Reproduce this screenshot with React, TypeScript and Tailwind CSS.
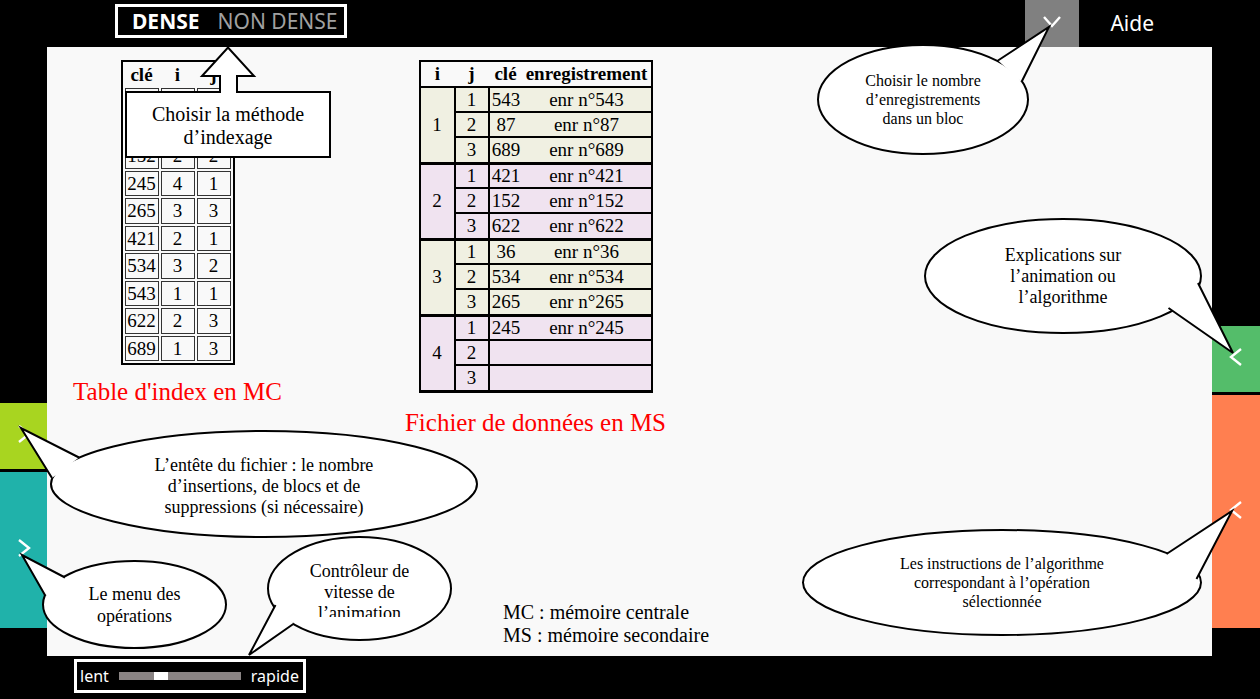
import React from "react";
import clsx from "clsx";

const indexRows = [
  [36, 3, 1],
  [87, 1, 2],
  [152, 2, 2],
  [245, 4, 1],
  [265, 3, 3],
  [421, 2, 1],
  [534, 3, 2],
  [543, 1, 1],
  [622, 2, 3],
  [689, 1, 3],
];

const blocks: (number | null)[][] = [
  [543, 87, 689],
  [421, 152, 622],
  [36, 534, 265],
  [245, null, null],
];

type Direction = "left" | "right" | "down";

const chevrons: Record<Direction, string> = {
  left: "M15 3 L5 11 L15 19",
  right: "M5 3 L15 11 L5 19",
  down: "M2 6 L10 15 L18 6",
};

function Chevron({ direction }: { direction: Direction }) {
  return (
    <svg width="20" height="22" viewBox="0 0 20 22" fill="none" stroke="#fff" strokeWidth="2.4" aria-hidden="true">
      <path d={chevrons[direction]} />
    </svg>
  );
}

function PanelTab({ label, direction, className }: { label: string; direction: Direction; className: string }) {
  return (
    <button type="button" aria-label={label} className={clsx("flex items-center justify-center pb-1", className)}>
      <Chevron direction={direction} />
    </button>
  );
}

interface CalloutProps {
  className: string;
  viewBox: string;
  path: string;
  oval?: boolean;
  textClass?: string;
  lines: string[];
}

/* The path of an oval callout is its open tail, drawn over the outline. */
function Callout({ className, viewBox, path, oval = true, textClass, lines }: CalloutProps) {
  const [x, y, w, h] = viewBox.split(" ").map(Number);
  return (
    <div className={clsx("absolute flex items-center justify-center", className)}>
      <svg
        className="absolute inset-0 h-full w-full overflow-visible"
        viewBox={viewBox}
        fill="#fff"
        stroke="#000"
        strokeWidth="2"
        aria-hidden="true"
      >
        {oval && <ellipse cx={x + w / 2} cy={y + h / 2} rx={w / 2} ry={h / 2} />}
        <path d={path} />
      </svg>
      <p className={clsx("relative text-center whitespace-nowrap", textClass)}>
        {lines.map((line) => (
          <span key={line} className="block">
            {line}
          </span>
        ))}
      </p>
    </div>
  );
}

function IndexTable() {
  return (
    <table className="border-separate border-spacing-[2px] border-2 border-black text-center text-[19px] leading-[22px]">
      <thead>
        <tr>
          {["clé", "i", "j"].map((h) => (
            <th key={h} className="w-[34px] p-0 font-bold">
              {h}
            </th>
          ))}
        </tr>
      </thead>
      <tbody>
        {indexRows.map((row) => (
          <tr key={row[0]} className="odd:h-[26px] even:h-[25px]">
            {row.map((value, c) => (
              <td key={c} className="border border-[#333] p-0">
                {value}
              </td>
            ))}
          </tr>
        ))}
      </tbody>
    </table>
  );
}

function DataTable() {
  return (
    <table className="border-collapse border-2 border-black text-center text-[19px] leading-[22px]">
      <thead>
        <tr className="h-[26px] border-b-2 border-black">
          <th className="w-[35px] p-0">i</th>
          <th className="w-[34px] p-0">j</th>
          <th className="w-[34px] p-0">clé</th>
          <th className="w-[129px] p-0">enregistrement</th>
        </tr>
      </thead>
      {blocks.map((keys, b) => (
        <tbody
          key={b}
          className={clsx("border-b-3 border-black", b % 2 === 0 ? "bg-[#f0f0e2]" : "bg-[#f0e3f0]")}
        >
          {keys.map((key, j) => (
            <tr key={j} className="h-[25px] last:h-[26px]">
              {j === 0 && (
                <td rowSpan={3} className="border-r-2 border-black p-0">
                  {b + 1}
                </td>
              )}
              <td className={clsx("border-r-2 border-black p-0", j < 2 && "border-b-2")}>{j + 1}</td>
              <td className={clsx("border-black p-0", j < 2 && "border-b-2")}>{key}</td>
              <td className={clsx("border-black p-0", j < 2 && "border-b-2")}>{key !== null && `enr n°${key}`}</td>
            </tr>
          ))}
        </tbody>
      ))}
    </table>
  );
}

export default function App() {
  return (
    <div className="relative flex min-h-screen flex-col bg-black font-['Liberation_Serif',serif] text-black">
      <header className="flex h-[47px] items-stretch font-['Comic_Sans_MS','Noto_Sans',sans-serif] text-[21px] text-white">
        <div className="mt-1 ml-[115px] flex h-[34px] items-center gap-[18px] border-3 border-white pt-[2px] pr-[6px] pl-[14px]">
          <button type="button" aria-pressed="true" className="font-bold">
            DENSE
          </button>
          <button type="button" aria-pressed="false" className="text-[#a0a0a0]">
            NON DENSE
          </button>
        </div>
        <PanelTab label="Nombre d’enregistrements dans un bloc" direction="down" className="ml-auto w-[54px] bg-[#808080]" />
        <a href="#aide" className="flex items-center pr-[106px] pl-[31px]">
          Aide
        </a>
      </header>

      <div className="flex flex-1">
        <nav className="flex w-[47px] flex-col justify-end gap-[3px] pb-7">
          <PanelTab label="Entête du fichier" direction="right" className="h-[66px] bg-[#a8d520]" />
          <PanelTab label="Menu des opérations" direction="right" className="h-[156px] bg-[#20b2aa]" />
        </nav>

        <main className="flex flex-1 flex-col justify-between bg-[#f9f9f9] pt-[13px] pb-[9px] pl-6">
          <div className="flex items-start gap-[120px]">
            <figure className="flex w-[213px] flex-col items-center gap-3">
              <IndexTable />
              <figcaption className="text-[25px] leading-[30px] text-[#ff0000]">Table d'index en MC</figcaption>
            </figure>
            <figure className="flex w-[263px] flex-col items-center gap-[15px]">
              <DataTable />
              <figcaption className="text-[25px] leading-[30px] text-[#ff0000]">Fichier de données en MS</figcaption>
            </figure>
          </div>
          <p className="ml-[432px] text-[20px] leading-[23px]">
            MC : mémoire centrale
            <br />
            MS : mémoire secondaire
          </p>
        </main>

        <nav className="flex w-12 flex-col justify-end gap-[3px] pb-7">
          <PanelTab label="Explications" direction="left" className="h-[66px] bg-[#54bd6a]" />
          <PanelTab label="Instructions de l’algorithme" direction="left" className="h-[233px] bg-[#ff7f50]" />
        </nav>
      </div>

      <footer className="flex h-[43px] items-start pt-[3px] pl-[74px] font-['Comic_Sans_MS','Noto_Sans',sans-serif] text-[16px] text-white">
        <label className="flex h-[34px] items-center border-3 border-white pr-[4px] pl-[3px]">
          <span>lent</span>
          <input
            type="range"
            min="0"
            max="100"
            defaultValue="33"
            aria-label="Vitesse de l’animation"
            className="mx-[10px] h-2 w-[122px] appearance-none bg-[#8a8484] [&::-webkit-slider-thumb]:h-2 [&::-webkit-slider-thumb]:w-[14px] [&::-webkit-slider-thumb]:appearance-none [&::-webkit-slider-thumb]:bg-white"
          />
          <span>rapide</span>
        </label>
      </footer>

      <Callout
        className="top-[91px] left-[125px] h-[67px] w-[206px]"
        viewBox="125 91 206 67"
        path="M126 92 H220 V76 H202 L228 47.5 L254 76 H237 V92 H330 V157 H126 Z"
        oval={false}
        textClass="pt-[3px] text-[20px] leading-[23px]"
        lines={["Choisir la méthode", "d’indexage"]}
      />
      <Callout
        className="top-[45px] right-[232px] h-[109px] w-[210px]"
        viewBox="818 45 210 109"
        path="M998 60.5 L1049 27 L1021.5 82"
        textClass="text-[16px] leading-[19px]"
        lines={["Choisir le nombre", "d’enregistrements", "dans un bloc"]}
      />
      <Callout
        className="top-[219px] right-[59px] h-[114px] w-[276px]"
        viewBox="925 219 276 114"
        path="M1198 283 L1233 353 L1168.5 308"
        textClass="text-[18px] leading-[21px]"
        lines={["Explications sur", "l’animation ou", "l’algorithme"]}
      />
      <Callout
        className="top-[431px] left-[51px] h-[106px] w-[426px]"
        viewBox="51 431 426 106"
        path="M52 478 L21 428 L79 457.5"
        textClass="pt-1 text-[18px] leading-[21px]"
        lines={["L’entête du fichier : le nombre", "d’insertions, de blocs et de", "suppressions (si nécessaire)"]}
      />
      <Callout
        className="top-[561px] left-[43px] h-[87px] w-[183px]"
        viewBox="43 561 183 87"
        path="M45.5 596 L22 555 L65 577.5"
        textClass="text-[18px] leading-[22px]"
        lines={["Le menu des", "opérations"]}
      />
      <Callout
        className="top-[537px] left-[268px] h-[103px] w-[183px]"
        viewBox="268 537 183 103"
        path="M294 623.5 L249 655 L275.5 605"
        textClass="h-14 overflow-hidden text-[18px] leading-[21px]"
        lines={["Contrôleur de", "vitesse de", "l’animation"]}
      />
      <Callout
        className="top-[530px] right-[59px] h-[105px] w-[398px]"
        viewBox="803 530 398 105"
        path="M1166.5 554 L1232 511 L1196.5 579"
        textClass="text-[16px] leading-[19px]"
        lines={["Les instructions de l’algorithme", "correspondant à l’opération", "sélectionnée"]}
      />
    </div>
  );
}
